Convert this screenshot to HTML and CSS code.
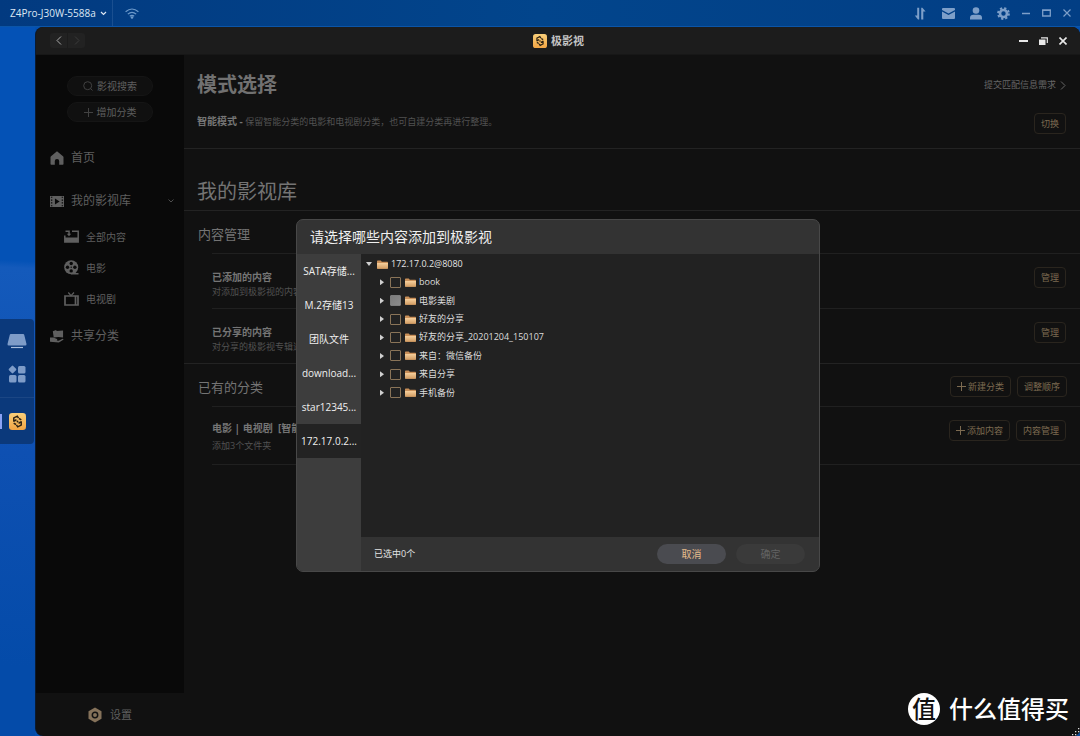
FILE: index.html
```
<!DOCTYPE html>
<html lang="zh-CN">
<head>
<meta charset="utf-8">
<title>极影视</title>
<link rel="stylesheet" href="styles.css">
</head>
<body>
<svg class="defs" aria-hidden="true">
  <defs>
    <linearGradient id="gold" x1="0" y1="0" x2="0" y2="1"><stop offset="0" stop-color="#f9cf7a"/><stop offset="1" stop-color="#f2a544"/></linearGradient>
    <linearGradient id="tan" x1="0" y1="0" x2="0" y2="1"><stop offset="0" stop-color="#f6cf9c"/><stop offset="1" stop-color="#d19c63"/></linearGradient>
    <symbol id="app" viewBox="0 0 16 16"><rect width="16" height="16" rx="3" fill="url(#gold)"/><path d="M4.500 8.200V4.600L7.800 3l1.200 1.800M5 7.600l2-1.400M11.500 7.800v3.600L8.200 13 7 11.200M11 8.400l-2 1.400M9.400 5.200l2.200 1.200M6.600 10.800l-2.200-1.200" fill="none" stroke="#2b2113" stroke-width="1.400"/><circle cx="8" cy="8" r=".9" fill="#2b2113"/></symbol>
    <symbol id="folder" viewBox="0 0 11 9"><path d="M0 1.200Q0 .5.7.5h3.100l1 1.200h5.500q.7 0 .7.7V8q0 .7-.7.7H.7Q0 8.700 0 8z" fill="#c98f58"/><path d="M0 3h11v5q0 .7-.7.7H.7Q0 8.700 0 8z" fill="url(#tan)"/></symbol>
    <symbol id="plus" viewBox="0 0 9 9"><path d="M4.500 0v9M0 4.500h9" fill="none" stroke="currentColor" stroke-width="1"/></symbol>
  </defs>
</svg>

<header class="topbar">
  <button class="device">Z4Pro-J30W-5588a
    <svg width="7" height="5" viewBox="0 0 7 5"><path d="M1 1l2.500 2.500L6 1" fill="none" stroke="currentColor" stroke-width="1.200"/></svg>
  </button>
  <svg class="wifi" width="14" height="11" viewBox="0 0 14 11"><g fill="none" stroke="currentColor" stroke-width="1.200"><path d="M.6 3.800Q7-1.800 13.400 3.800M2.800 6.100Q7 2.500 11.200 6.100M4.800 8.300Q7 6.500 9.200 8.300"/></g><circle cx="7" cy="9.500" r="1.300" fill="currentColor"/></svg>
  <div class="system">
    <button aria-label="传输"><svg width="13" height="13" viewBox="0 0 13 13"><path d="M3.200.8h2v11.700H4L.8 8.600h2.400zM7.200.8h1.200l3.200 3.700H9.300v8H7.200z" fill="currentColor"/></svg></button>
    <button aria-label="消息"><svg width="13" height="11" viewBox="0 0 13 11"><path d="M1 0h11q1 0 1 1v1L6.500 5.500 0 2V1q0-1 1-1zM0 3.600l6.500 3.400L13 3.600V10q0 1-1 1H1q-1 0-1-1z" fill="currentColor"/></svg></button>
    <button aria-label="用户"><svg width="12" height="13" viewBox="0 0 12 13"><circle cx="6" cy="3.500" r="3.300" fill="currentColor"/><path d="M0 12.500v-1.500q0-3.200 3.500-3.200h5Q12 7.800 12 11v1.500z" fill="currentColor"/></svg></button>
    <button aria-label="设置"><svg width="13" height="13" viewBox="0 0 13 13"><circle cx="6.500" cy="6.500" r="3.500" fill="none" stroke="currentColor" stroke-width="2.600"/><circle cx="6.500" cy="6.500" r="5.400" fill="none" stroke="currentColor" stroke-width="2" stroke-dasharray="2.240 2"/></svg></button>
    <button aria-label="最小化"><svg width="8" height="8" viewBox="0 0 8 8"><path d="M0 4.500h8" stroke="currentColor" stroke-width="1.500"/></svg></button>
    <button aria-label="最大化"><svg width="9" height="8" viewBox="0 0 9 8"><path d="M.7 1h7.600v6H.7z" fill="none" stroke="currentColor" stroke-width="1.300"/><path d="M0 1.500h9" stroke="currentColor"/></svg></button>
    <button aria-label="关闭"><svg width="8" height="8" viewBox="0 0 8 8"><path d="M.5.5l7 7M7.500.5l-7 7" stroke="currentColor" stroke-width="1.200"/></svg></button>
  </div>
</header>

<div class="desktop">
  <nav class="rail">
    <div class="dock">
      <button aria-label="桌面"><svg width="20" height="16" viewBox="0 0 20 16"><path d="M3.800 1h12.400q.8 0 1 .8L19.500 11q.2 1.500-1.300 1.500H1.800Q.3 12.500.5 11L2.800 1.800q.2-.8 1-.8z" fill="#7e9cc8"/><path d="M4 14.500h12" stroke="#a9bedd" stroke-width="1.200"/></svg></button>
      <button aria-label="应用"><svg width="18" height="18" viewBox="0 0 18 18"><g fill="#7e9cc8"><rect x="1.500" y="1.500" width="6" height="6" rx="1" transform="rotate(45 4.500 4.500)"/><rect x="10" y="1" width="7.500" height="7.500" rx="1.500"/><rect x="1" y="10" width="7.500" height="7.500" rx="1.500"/><rect x="10" y="10" width="7.500" height="7.500" rx="1.500"/></g></svg></button>
      <button class="running" aria-label="极影视"><svg width="17" height="17"><use href="#app"/></svg></button>
    </div>
  </nav>

  <section class="window">
    <header class="titlebar">
      <div class="history">
        <button aria-label="后退"><svg width="6" height="9" viewBox="0 0 6 9"><path d="M5 .5l-4 4 4 4" fill="none" stroke="currentColor"/></svg></button>
        <button aria-label="前进" disabled><svg width="6" height="9" viewBox="0 0 6 9"><path d="M1 .5l4 4-4 4" fill="none" stroke="currentColor"/></svg></button>
      </div>
      <h1 class="apptitle"><svg width="14" height="14"><use href="#app"/></svg>极影视</h1>
      <div class="controls">
        <button aria-label="最小化"><svg width="9" height="8" viewBox="0 0 9 8"><path d="M0 4h9" stroke="currentColor" stroke-width="1.800"/></svg></button>
        <button aria-label="还原"><svg width="9" height="8" viewBox="0 0 9 8"><path d="M0 2.500h6.500V8H0z" fill="currentColor"/><path d="M2 .8h6.300V6" fill="none" stroke="currentColor" stroke-width="1.200"/></svg></button>
        <button aria-label="关闭"><svg width="8" height="8" viewBox="0 0 8 8"><path d="M.5.5l7 7M7.500.5l-7 7" stroke="currentColor" stroke-width="1.600"/></svg></button>
      </div>
    </header>

    <div class="content">
      <aside class="sidebar">
        <div class="menu">
          <div class="pills">
            <button class="pill"><svg width="10" height="10" viewBox="0 0 10 10"><circle cx="4.700" cy="4.700" r="4" fill="none" stroke="currentColor"/><path d="M7.500 7.500L9.500 9.500" stroke="currentColor"/></svg>影视搜索</button>
            <button class="pill"><svg width="9" height="9"><use href="#plus"/></svg>增加分类</button>
          </div>
          <a class="nav" href="#"><svg width="14" height="14" viewBox="0 0 14 14"><path d="M7 .3l6 5q.5.400.5 1V13q0 .7-.7.7H9.200V10q0-2-2.200-2t-2.200 2v3.700H1.200Q.5 13.700.5 13V6.300q0-.6.500-1z" fill="currentColor"/></svg>首页</a>
          <a class="nav library" href="#"><svg width="14" height="13" viewBox="0 0 15 13"><path d="M0 .5h15v12H0z" fill="currentColor"/><path d="M1 2h1.500M1 5h1.500M1 8h1.500M1 11h1.500M12.500 2H14M12.500 5H14M12.500 8H14M12.500 11H14" stroke="#090909" stroke-width="1.200"/><path d="M5.300 3.200L10.300 6.500 5.300 9.800z" fill="#080808"/></svg><span>我的影视库</span><svg width="6" height="4" viewBox="0 0 6 4"><path d="M.5.500L3 3 5.500.5" fill="none" stroke="currentColor" stroke-width=".8"/></svg></a>
          <a class="nav sub" href="#"><svg width="15" height="13" viewBox="0 0 15 13"><path d="M.8 5.500V12h13.400V1.200H8" fill="none" stroke="currentColor" stroke-width="1.500"/><path d="M1 7.500h13V12H1zM1.500.5h4.300v3.300h1.400L5 6.200 2.800 3.800h1.500V2H1.500z" fill="currentColor"/></svg>全部内容</a>
          <a class="nav sub" href="#"><svg width="15" height="15" viewBox="0 0 15 15"><circle cx="7.200" cy="7.200" r="7" fill="currentColor"/><path d="M8 13h6.500v1.500H7z" fill="currentColor"/><g fill="#090909"><circle cx="7.200" cy="3.500" r="1.700"/><circle cx="3.500" cy="7.200" r="1.700"/><circle cx="10.900" cy="7.200" r="1.700"/><circle cx="7.200" cy="10.900" r="1.700"/><circle cx="7.200" cy="7.200" r=".7"/></g></svg>电影</a>
          <a class="nav sub" href="#"><svg width="15" height="14" viewBox="0 0 15 14"><path d="M1 4h13v9H1zM11.500 4v9" fill="none" stroke="currentColor" stroke-width="1.700"/><path d="M4.300.5L7 3.700 10 .5" fill="none" stroke="currentColor" stroke-width="1.200"/></svg>电视剧</a>
          <a class="nav share" href="#"><svg width="14" height="15" viewBox="0 0 15 15"><path d="M3 2l3.500-1.500.7 1L14 1v7.500L9 8 4 8.500z" fill="currentColor"/><path d="M0 8.500h3.500l4 1.700q.8 1-.3 1.500l2 .3L13.500 10q1.300 0 .8 1L9.500 14 0 13.200z" fill="currentColor"/></svg>共享分类</a>
        </div>
        <a class="settings" href="#"><svg width="14" height="16" viewBox="0 0 14 16"><path d="M7 .5l6.500 3.700v7.600L7 15.500.5 11.800V4.200z" fill="#85725a"/><circle cx="7" cy="8" r="2.700" fill="none" stroke="#121212" stroke-width="1.500"/></svg>设置</a>
      </aside>

      <main class="main">
        <section class="mode">
          <div class="row">
            <h2 class="strong">模式选择</h2>
            <a class="request" href="#">提交匹配信息需求<svg width="6" height="9" viewBox="0 0 6 9"><path d="M1 .5l4 4-4 4" fill="none" stroke="currentColor"/></svg></a>
          </div>
          <div class="row">
            <p class="desc"><b>智能模式 -</b> 保留智能分类的电影和电视剧分类，也可自建分类再进行整理。</p>
            <button class="btn">切换</button>
          </div>
        </section>
        <h2 class="heading">我的影视库</h2>
        <section class="block">
          <div class="blockhead"><h3>内容管理</h3></div>
          <div class="item"><div><h4>已添加的内容</h4><p>对添加到极影视的内容</p></div><button class="btn">管理</button></div>
          <div class="item"><div><h4>已分享的内容</h4><p>对分享的极影视专辑进</p></div><button class="btn">管理</button></div>
        </section>
        <section class="block">
          <div class="blockhead"><h3>已有的分类</h3><button class="btn"><svg width="9" height="9"><use href="#plus"/></svg>新建分类</button><button class="btn">调整顺序</button></div>
          <div class="item last"><div><h4>电影 | 电视剧&nbsp; [智能</h4><p>添加3个文件夹</p></div><button class="btn"><svg width="9" height="9"><use href="#plus"/></svg>添加内容</button><button class="btn">内容管理</button></div>
        </section>
      </main>

      <div class="overlay">
        <div class="dialog" role="dialog" aria-labelledby="dlg">
          <h2 class="dlgtitle" id="dlg">请选择哪些内容添加到极影视</h2>
          <div class="dlgbody">
            <div class="tabs">
              <button class="tab">SATA存储...</button>
              <button class="tab">M.2存储13</button>
              <button class="tab">团队文件</button>
              <button class="tab">download...</button>
              <button class="tab">star12345...</button>
              <button class="tab active">172.17.0.2...</button>
            </div>
            <div class="pane">
              <div class="tree">
                <div class="root"><i class="caret open"></i><svg width="11" height="9"><use href="#folder"/></svg>172.17.0.2@8080</div>
                <ul class="nodes">
                  <li><i class="caret"></i><input type="checkbox" id="n1"><label for="n1"><svg width="11" height="9"><use href="#folder"/></svg>book</label></li>
                  <li><i class="caret"></i><input type="checkbox" id="n2" checked disabled><label for="n2"><svg width="11" height="9"><use href="#folder"/></svg>电影美剧</label></li>
                  <li><i class="caret"></i><input type="checkbox" id="n3"><label for="n3"><svg width="11" height="9"><use href="#folder"/></svg>好友的分享</label></li>
                  <li><i class="caret"></i><input type="checkbox" id="n4"><label for="n4"><svg width="11" height="9"><use href="#folder"/></svg>好友的分享_20201204_150107</label></li>
                  <li><i class="caret"></i><input type="checkbox" id="n5"><label for="n5"><svg width="11" height="9"><use href="#folder"/></svg>来自：微信备份</label></li>
                  <li><i class="caret"></i><input type="checkbox" id="n6"><label for="n6"><svg width="11" height="9"><use href="#folder"/></svg>来自分享</label></li>
                  <li><i class="caret"></i><input type="checkbox" id="n7"><label for="n7"><svg width="11" height="9"><use href="#folder"/></svg>手机备份</label></li>
                </ul>
              </div>
              <footer class="dlgfoot"><span>已选中0个</span><button class="cancel">取消</button><button class="confirm" disabled>确定</button></footer>
            </div>
          </div>
        </div>
      </div>
    </div>
  </section>
</div>

<div class="brand"><span class="seal">值</span>什么值得买</div>
<svg class="grip" width="8" height="8" viewBox="0 0 8 8"><path d="M8 4v4H4z" fill="#0a4c9c"/><path d="M6 0h1.300v1.300H6zM3 3h1.300v1.300H3zM6 3h1.300v1.300H6zM0 6h1.300v1.300H0zM3 6h1.300v1.300H3z" fill="#ddd"/></svg>
</body>
</html>
```
FILE: styles.css
```
* { box-sizing: border-box; }

body {
  margin: 0;
  height: 100vh;
  display: flex;
  flex-direction: column;
  overflow: hidden;
  background: #0450b0;
  color: #6e6e6e;
  font: 10px/16px "Open Sans", "Noto Sans CJK SC", sans-serif;
}

h1, h2, h3, h4, p, ul { margin: 0; padding: 0; font-weight: 400; }
ul { list-style: none; }
a { color: inherit; text-decoration: none; }
svg { display: block; flex: none; }
button {
  display: flex;
  align-items: center;
  justify-content: center;
  padding: 0;
  border: 0;
  background: none;
  color: inherit;
  font: inherit;
  white-space: nowrap;
}
.defs { position: absolute; width: 0; height: 0; }

/* System bar */
.topbar {
  flex: none;
  display: flex;
  align-items: center;
  height: 27px;
  border-bottom: 1px solid #0b55a8;
  background: linear-gradient(90deg, #023a80, #02458c 50%, #023e84);
}
.device {
  gap: 4px;
  height: 26px;
  padding: 0 5px 0 10px;
  border-right: 1px solid #1a4f90;
  color: #dde7f3;
  font-size: 10px;
  font-weight: 500;
}
.wifi { margin-left: 12px; color: #6d9acb; }
.system {
  display: flex;
  align-items: center;
  gap: 12px;
  margin-left: auto;
  padding-right: 9px;
  color: #7d9fc9;
}
.system button:nth-child(-n+3) { margin-right: 3px; }

/* Dock */
.desktop { flex: 1; display: flex; min-height: 0; }
.rail {
  flex: none;
  width: 35px;
  display: flex;
  align-items: center;
  background: linear-gradient(183deg, #0452b6 33%, #145abb 34%, #0e50b2 60%, #044ba9 90%);
}
.dock {
  width: 34px;
  padding: 12px 0 13px;
  border-radius: 0 4px 4px 0;
  background: #0b397b;
}
.dock button { width: 34px; height: 20px; margin-bottom: 13px; }
.dock .running {
  height: 34px;
  margin: 0;
  border-top: 1px solid #1b4684;
  padding-top: 14px;
  background: linear-gradient(#8aa2f5, #8aa2f5) 0 16px / 2px 15px no-repeat;
}

/* Application window */
.window {
  flex: 1;
  display: flex;
  flex-direction: column;
  min-width: 0;
  border-left: 1px solid #0a1a30;
  border-radius: 8px 8px 0 8px;
  overflow: hidden;
  background: #111;
}
.titlebar {
  flex: none;
  display: grid;
  grid-template-columns: 1fr auto 1fr;
  align-items: center;
  height: 28px;
  padding: 0 13px 0 14px;
  border-bottom: 1px solid #171717;
  background: #1c1c1c;
}
.history { display: flex; gap: 1px; }
.history button { width: 17px; height: 15px; background: #222; color: #aaa; }
.history button:first-child { border-radius: 3px 0 0 3px; }
.history button:last-child { border-radius: 0 3px 3px 0; color: #3a3a3a; }
.apptitle {
  display: flex;
  align-items: center;
  gap: 4px;
  color: #c4c4c4;
  font-size: 11px;
  font-weight: 700;
}
.controls { display: flex; justify-content: flex-end; gap: 11px; color: #e8e8e8; }
.content { flex: 1; display: flex; position: relative; min-height: 0; }

/* Sidebar */
.sidebar {
  flex: none;
  width: 148px;
  display: flex;
  flex-direction: column;
  color: #5f5f5f;
}
.menu { flex: 1; background: #090909; }
.pills {
  display: flex;
  flex-direction: column;
  align-items: center;
  gap: 6px;
  padding: 21px 0 24px;
}
.pill {
  gap: 4px;
  width: 86px;
  height: 20px;
  border: 1px solid #151515;
  border-radius: 10px;
  background: #101010;
}
.pill svg { color: #424242; }
.nav {
  display: flex;
  align-items: center;
  gap: 7px;
  height: 24px;
  padding: 0 10px 0 14px;
  font-size: 12px;
}
.nav.library { margin: 19px 0 8px; }
.library span { flex: 1; }
.nav.sub { height: 31px; padding-left: 28px; font-size: 10px; }
.nav.share { margin-top: 10px; }
.settings {
  flex: none;
  display: flex;
  align-items: center;
  gap: 8px;
  height: 43px;
  padding-left: 52px;
  font-size: 11px;
}

/* Main page */
.main { flex: 1; min-width: 0; font-size: 9px; }
.mode {
  display: flex;
  flex-direction: column;
  gap: 7px;
  height: 94px;
  padding: 15px 14px 0 13px;
  border-bottom: 1px solid #232323;
}
.row { display: flex; align-items: center; justify-content: space-between; height: 30px; }
.strong { color: #717171; font-size: 20px; line-height: 30px; font-weight: 700; }
.request { display: flex; align-items: center; gap: 4px; color: #666; }
.desc { color: #525252; line-height: 16px; }
.desc b { color: #757575; font-size: 10px; }
.mode .row:last-child { align-items: flex-start; padding-top: 6px; }
.heading {
  height: 62px;
  padding: 28px 13px 0;
  border-bottom: 1px solid #232323;
  color: #747474;
  font-size: 20px;
  line-height: 30px;
}
.block { border-bottom: 1px solid #232323; }
.block:last-child { border: 0; }
.blockhead {
  display: flex;
  align-items: center;
  gap: 6px;
  height: 42px;
  padding: 3px 13px 0 14px;
}
.blockhead h3 { margin-right: auto; color: #747474; font-size: 13px; line-height: 20px; }
.item {
  display: flex;
  align-items: flex-start;
  gap: 6px;
  height: 55px;
  margin-left: 28px;
  padding: 13px 14px 0 0;
  border-top: 1px solid #202020;
}
.item div { flex: 1; padding-top: 2px; }
.item h4 { color: #757575; font-size: 10px; line-height: 16px; font-weight: 700; }
.item p { color: #525252; line-height: 14px; }
.item.last { height: 59px; border-bottom: 1px solid #202020; }
.item.last div { padding: 0; }
.item.last p { margin-top: 2px; line-height: 16px; }
.btn {
  gap: 2px;
  height: 21px;
  padding: 0 6px;
  border: 1px solid #2a251e;
  border-radius: 4px;
  color: #7c6a50;
  font-size: 9px;
}

/* Dialog */
.overlay {
  position: absolute;
  inset: 0;
  display: flex;
  align-items: center;
  justify-content: center;
}
.dialog {
  width: 524px;
  max-width: 94%;
  border: 1px solid #484848;
  border-radius: 7px;
  overflow: hidden;
  background: #333;
  color: #e4e4e4;
}
.dlgtitle { height: 34px; padding: 0 13px; color: #f0f0f0; font-size: 14px; line-height: 34px; }
.dlgbody { display: flex; min-height: 317px; }
.tabs { flex: none; width: 64px; background: #3d3d3d; }
.tab { width: 64px; height: 34px; color: #efefef; font-size: 10px; }
.tab.active { background: #232323; }
.pane { flex: 1; display: flex; flex-direction: column; min-width: 0; font-size: 9px; }
.tree { flex: 1; padding: 1px 4px; background: #222; }
.root { display: flex; align-items: center; height: 18px; }
.root svg { margin: 0 3px 0 5px; }
.nodes { display: grid; grid-auto-rows: 1fr; height: 129px; padding-left: 15px; }
.nodes li { display: flex; align-items: center; }
.nodes label { display: flex; align-items: center; gap: 3px; color: #dedede; }
.nodes input {
  appearance: none;
  width: 11px;
  height: 11px;
  margin: 0 4px 0 6px;
  border: 1px solid #8a7458;
  border-radius: 1px;
}
.nodes input:disabled {
  border-color: #7c7c7c;
  background: linear-gradient(135deg, #7c7c7c, #8a8a8a);
}
.caret {
  flex: none;
  width: 4px;
  height: 6px;
  background: #d0d0d0;
  clip-path: polygon(0 0, 100% 50%, 0 100%);
}
.caret.open { width: 6px; height: 4px; margin-left: 1px; clip-path: polygon(0 0, 100% 0, 50% 100%); }
.dlgfoot {
  flex: none;
  display: flex;
  align-items: center;
  gap: 10px;
  height: 34px;
  padding: 0 14px 0 13px;
}
.dlgfoot span { margin-right: auto; }
.dlgfoot button { width: 69px; height: 20px; border-radius: 10px; font-size: 10px; }
.cancel { background: #4a4b50; color: #e6bd8c; }
.confirm { background: #3a3a3a; color: #636363; }

/* Corner brand laid over the desktop */
.brand {
  position: absolute;
  right: 11px;
  bottom: 11px;
  display: flex;
  align-items: center;
  gap: 9px;
  color: #fff;
  font-size: 24px;
  line-height: 32px;
  font-weight: 500;
}
.seal {
  width: 32px;
  height: 32px;
  border-radius: 50%;
  background: #fff;
  color: #111;
  text-align: center;
  font-size: 24px;
  line-height: 32px;
}
.grip { position: absolute; right: 0; bottom: 0; }
```
